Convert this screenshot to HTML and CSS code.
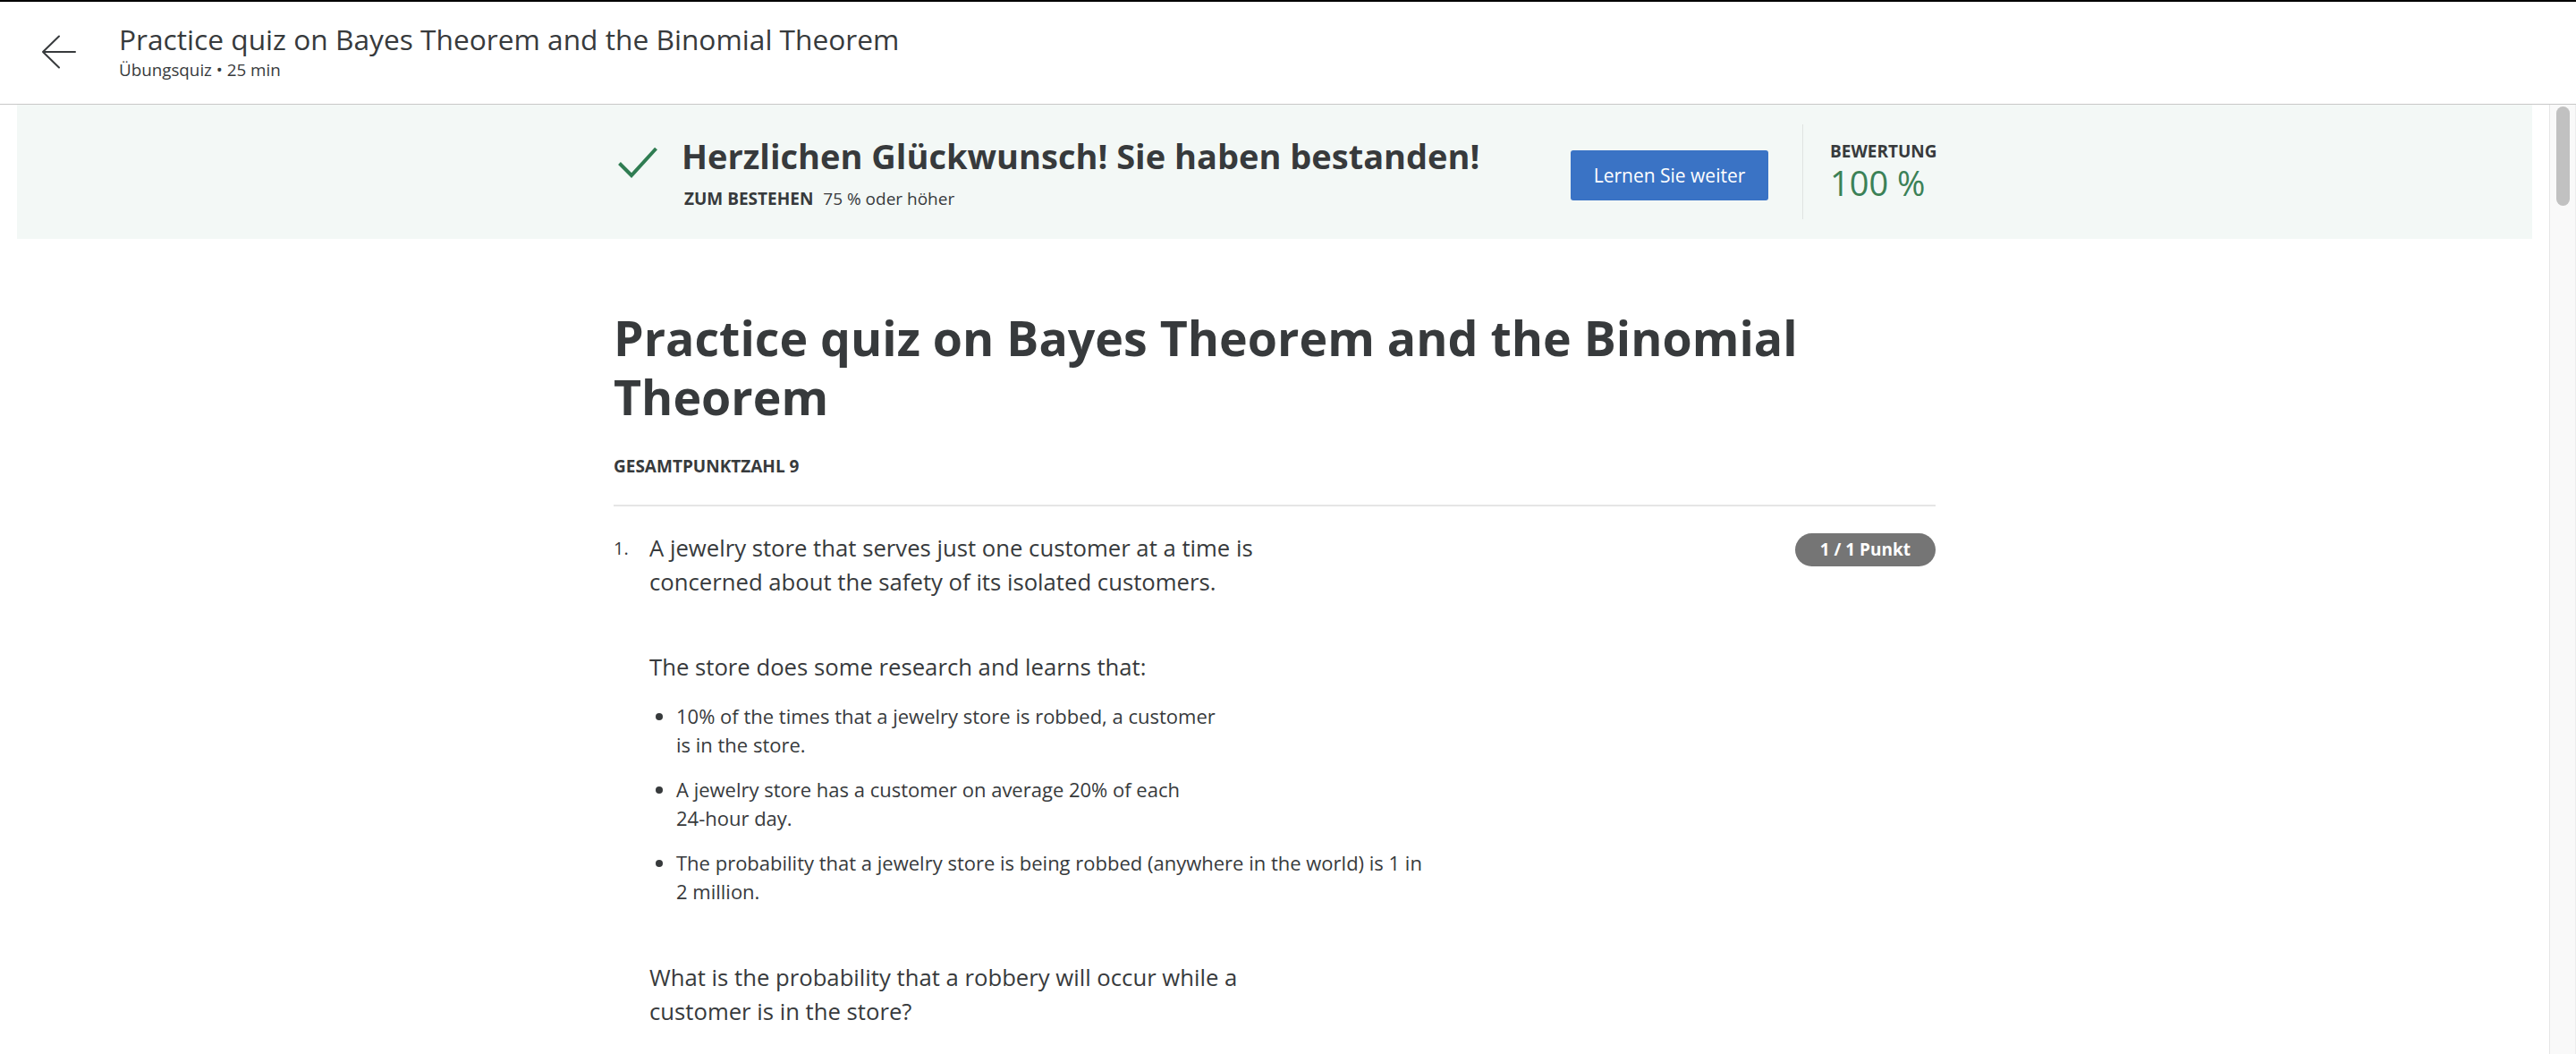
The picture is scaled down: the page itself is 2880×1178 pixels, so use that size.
FILE: index.html
```html
<!DOCTYPE html>
<html lang="de">
<head>
<meta charset="utf-8">
<title>Practice quiz on Bayes Theorem and the Binomial Theorem</title>
<link rel="stylesheet" href="styles.css">
</head>
<body>
<div class="topline"></div>
<header class="header">
  <button class="back" aria-label="Zurück">
    <svg width="40" height="40" viewBox="0 0 40 40" fill="none" stroke="#373a3c" stroke-width="2" stroke-linecap="round" stroke-linejoin="round"><path d="M38 19H2M20 1.5L2 19l18 17.5"/></svg>
  </button>
  <div class="header-text">
    <div class="header-title">Practice quiz on Bayes Theorem and the Binomial Theorem</div>
    <div class="header-sub">Übungsquiz • 25 min</div>
  </div>
</header>
<div class="page">
  <main class="main">
    <section class="banner">
      <div class="banner-inner">
        <svg class="check" width="44" height="36" viewBox="0 0 44 36" fill="none" stroke="#2f7d52" stroke-width="4"><path d="M1.5 18.5L15 32L42.5 2"/></svg>
        <div class="banner-msg">
          <div class="banner-head">Herzlichen Glückwunsch! Sie haben bestanden!</div>
          <div class="banner-pass"><span class="label">ZUM BESTEHEN</span> 75 % oder höher</div>
        </div>
        <button class="btn">Lernen Sie weiter</button>
        <div class="score">
          <div class="label">BEWERTUNG</div>
          <div class="score-val">100 %</div>
        </div>
      </div>
    </section>
    <div class="content">
      <h1 class="quiz-title">Practice quiz on Bayes Theorem and the Binomial Theorem</h1>
      <div class="meta"><span class="label">GESAMTPUNKTZAHL 9</span></div>
      <div class="question">
        <div class="qnum">1.</div>
        <div class="qbody">
          <p class="qtext">A jewelry store that serves just one customer at a time is<br>concerned about the safety of its isolated customers.</p>
          <p class="qtext">The store does some research and learns that:</p>
          <ul class="qlist">
            <li>10% of the times that a jewelry store is robbed, a customer<br>is in the store.</li>
            <li>A jewelry store has a customer on average 20% of each<br>24-hour day.</li>
            <li>The probability that a jewelry store is being robbed (anywhere in the world) is 1 in<br>2 million.</li>
          </ul>
          <p class="qtext">What is the probability that a robbery will occur while a<br>customer is in the store?</p>
          <div class="options"><span class="radio"></span></div>
        </div>
        <div class="badge">1 / 1 Punkt</div>
      </div>
    </div>
  </main>
  <div class="scrollbar" aria-hidden="true"><div class="thumb"></div></div>
</div>
</body>
</html>
```
FILE: styles.css
```css
* { box-sizing: border-box; }
html, body { margin: 0; height: 100%; overflow: hidden; }
body {
  font-family: "Open Sans", "Noto Sans", sans-serif;
  color: #373a3c;
  background: #fff;
}
.topline { height: 2px; background: #000; }
.header {
  height: 115px;
  border-bottom: 1px solid #c8c8c8;
  display: flex;
  align-items: center;
  padding-left: 46px;
}
.back {
  border: 0;
  background: none;
  padding: 0;
  width: 40px;
  height: 40px;
  margin-right: 47px;
  display: flex;
}
.header-text { display: flex; flex-direction: column; margin-top: 0; }
.header-title { font-size: 31.7px; line-height: 34px; }
.header-sub { font-size: 18.8px; line-height: 26px; margin-top: 4px; }

.page {
  height: calc(100% - 117px);
  display: flex;
}
.main {
  flex: 1;
  overflow: hidden;
}
.scrollbar {
  width: 30px;
  flex: none;
  background: #f9f9f9;
  border-left: 1px solid #e6e6e6;
  border-right: 1px solid #ededed;
  padding: 2px 6px 0 7px;
}
.thumb {
  height: 111px;
  border-radius: 8px;
  background: #c1c1c1;
}

.banner {
  margin: 0 19px;
  height: 150px;
  background: #f3f8f6;
  display: flex;
  justify-content: center;
}
.banner-inner {
  width: 1478px;
  display: flex;
  align-items: center;
}
.check { margin-left: 5px; margin-right: 27px; margin-top: -20px; flex: none; }
.banner-msg { flex: 1; display: flex; flex-direction: column; gap: 13px; margin-top: 1px; }
.banner-head { font-size: 38px; font-weight: 700; line-height: 46px; }
.banner-pass { font-size: 19px; line-height: 24px; padding-left: 3px; }
.label { font-weight: 700; text-transform: uppercase; margin-right: 6px; }
.btn {
  font-family: inherit;
  width: 221px;
  height: 56px;
  border: 0;
  border-radius: 3px;
  background: #3a73c5;
  color: #fff;
  font-size: 21px;
  margin-right: 38px;
  margin-top: 7px;
}
.score {
  align-self: stretch;
  margin: 22px 0 22px;
  border-left: 1px solid #dfe3e1;
  padding-left: 30px;
  width: 149px;
  display: flex;
  flex-direction: column;
  justify-content: center;
}
.score .label { font-size: 19px; line-height: 24px; margin: 0; }
.score-val { font-size: 38px; line-height: 46px; color: #3b8157; }

.content { width: 1478px; margin: 0 auto; min-height: 9000px; }
.quiz-title {
  margin: 78px 0 0;
  font-size: 53.7px;
  line-height: 66px;
  font-weight: 700;
}
.meta {
  margin-top: 32px;
  padding-bottom: 31px;
  border-bottom: 2px solid #e5e5e5;
  font-size: 19px;
  line-height: 24px;
}
.question { display: flex; margin-top: 28px; }
.qnum { width: 40px; flex: none; font-size: 20px; line-height: 38px; }
.qbody { flex: 1; }
.qtext { margin: 0 0 57px; font-size: 25.7px; line-height: 38px; }
.qlist { margin: -38px 0 62px; padding-left: 30px; font-size: 22px; line-height: 32px; }
.qlist li { margin-bottom: 18px; padding-left: 0; }
.badge {
  flex: none;
  align-self: flex-start;
  margin-top: 2px;
  height: 37px;
  padding: 0 28px;
  border-radius: 19px;
  background: #757575;
  color: #fff;
  font-size: 19px;
  font-weight: 700;
  line-height: 37px;
}
.options { margin-top: -24px; }
.radio { display: block; width: 22px; height: 22px; border: 2px solid #999; border-radius: 50%; }
```
